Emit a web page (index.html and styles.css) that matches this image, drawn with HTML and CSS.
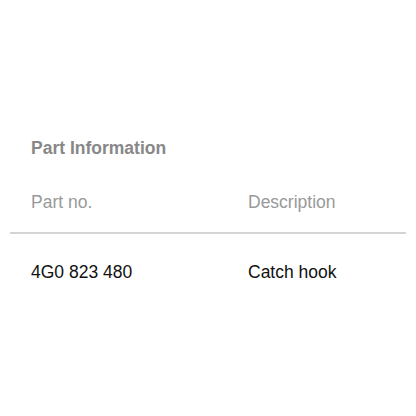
FILE: index.html
```html
<!DOCTYPE html>
<html lang="en">
<head>
  <meta charset="UTF-8">
  <title>Part Information</title>
  <link rel="stylesheet" href="styles.css">
</head>
<body>
  <section class="part-info">
    <h3 class="part-title">Part Information</h3>
    <div class="part-table">
      <div class="part-row part-head">
        <span class="col-no">Part no.</span>
        <span class="col-desc">Description</span>
      </div>
      <div class="part-row part-data">
        <span class="col-no">4G0 823 480</span>
        <span class="col-desc">Catch hook</span>
      </div>
    </div>
  </section>
</body>
</html>
```

FILE: styles.css
```css
* {
  margin: 0;
  padding: 0;
  box-sizing: border-box;
}

body {
  font-family: 'Liberation Sans', Arial, sans-serif;
  background: #fff;
  color: #111;
}

.part-info {
  padding: 138px 10px 0 10px;
}

.part-title {
  font-size: 17.5px;
  font-weight: bold;
  color: #888;
  line-height: 20px;
  padding-left: 21px;
}

.part-table {
  margin-top: 34px;
}

.part-row {
  display: flex;
  padding-left: 21px;
  font-size: 17.5px;
  line-height: 20px;
}

.part-head {
  color: #999;
  padding-bottom: 20px;
  border-bottom: 2px solid #d4d4d4;
}

.part-data {
  padding-top: 28px;
  color: #111;
}

.col-no {
  width: 217px;
}
```
